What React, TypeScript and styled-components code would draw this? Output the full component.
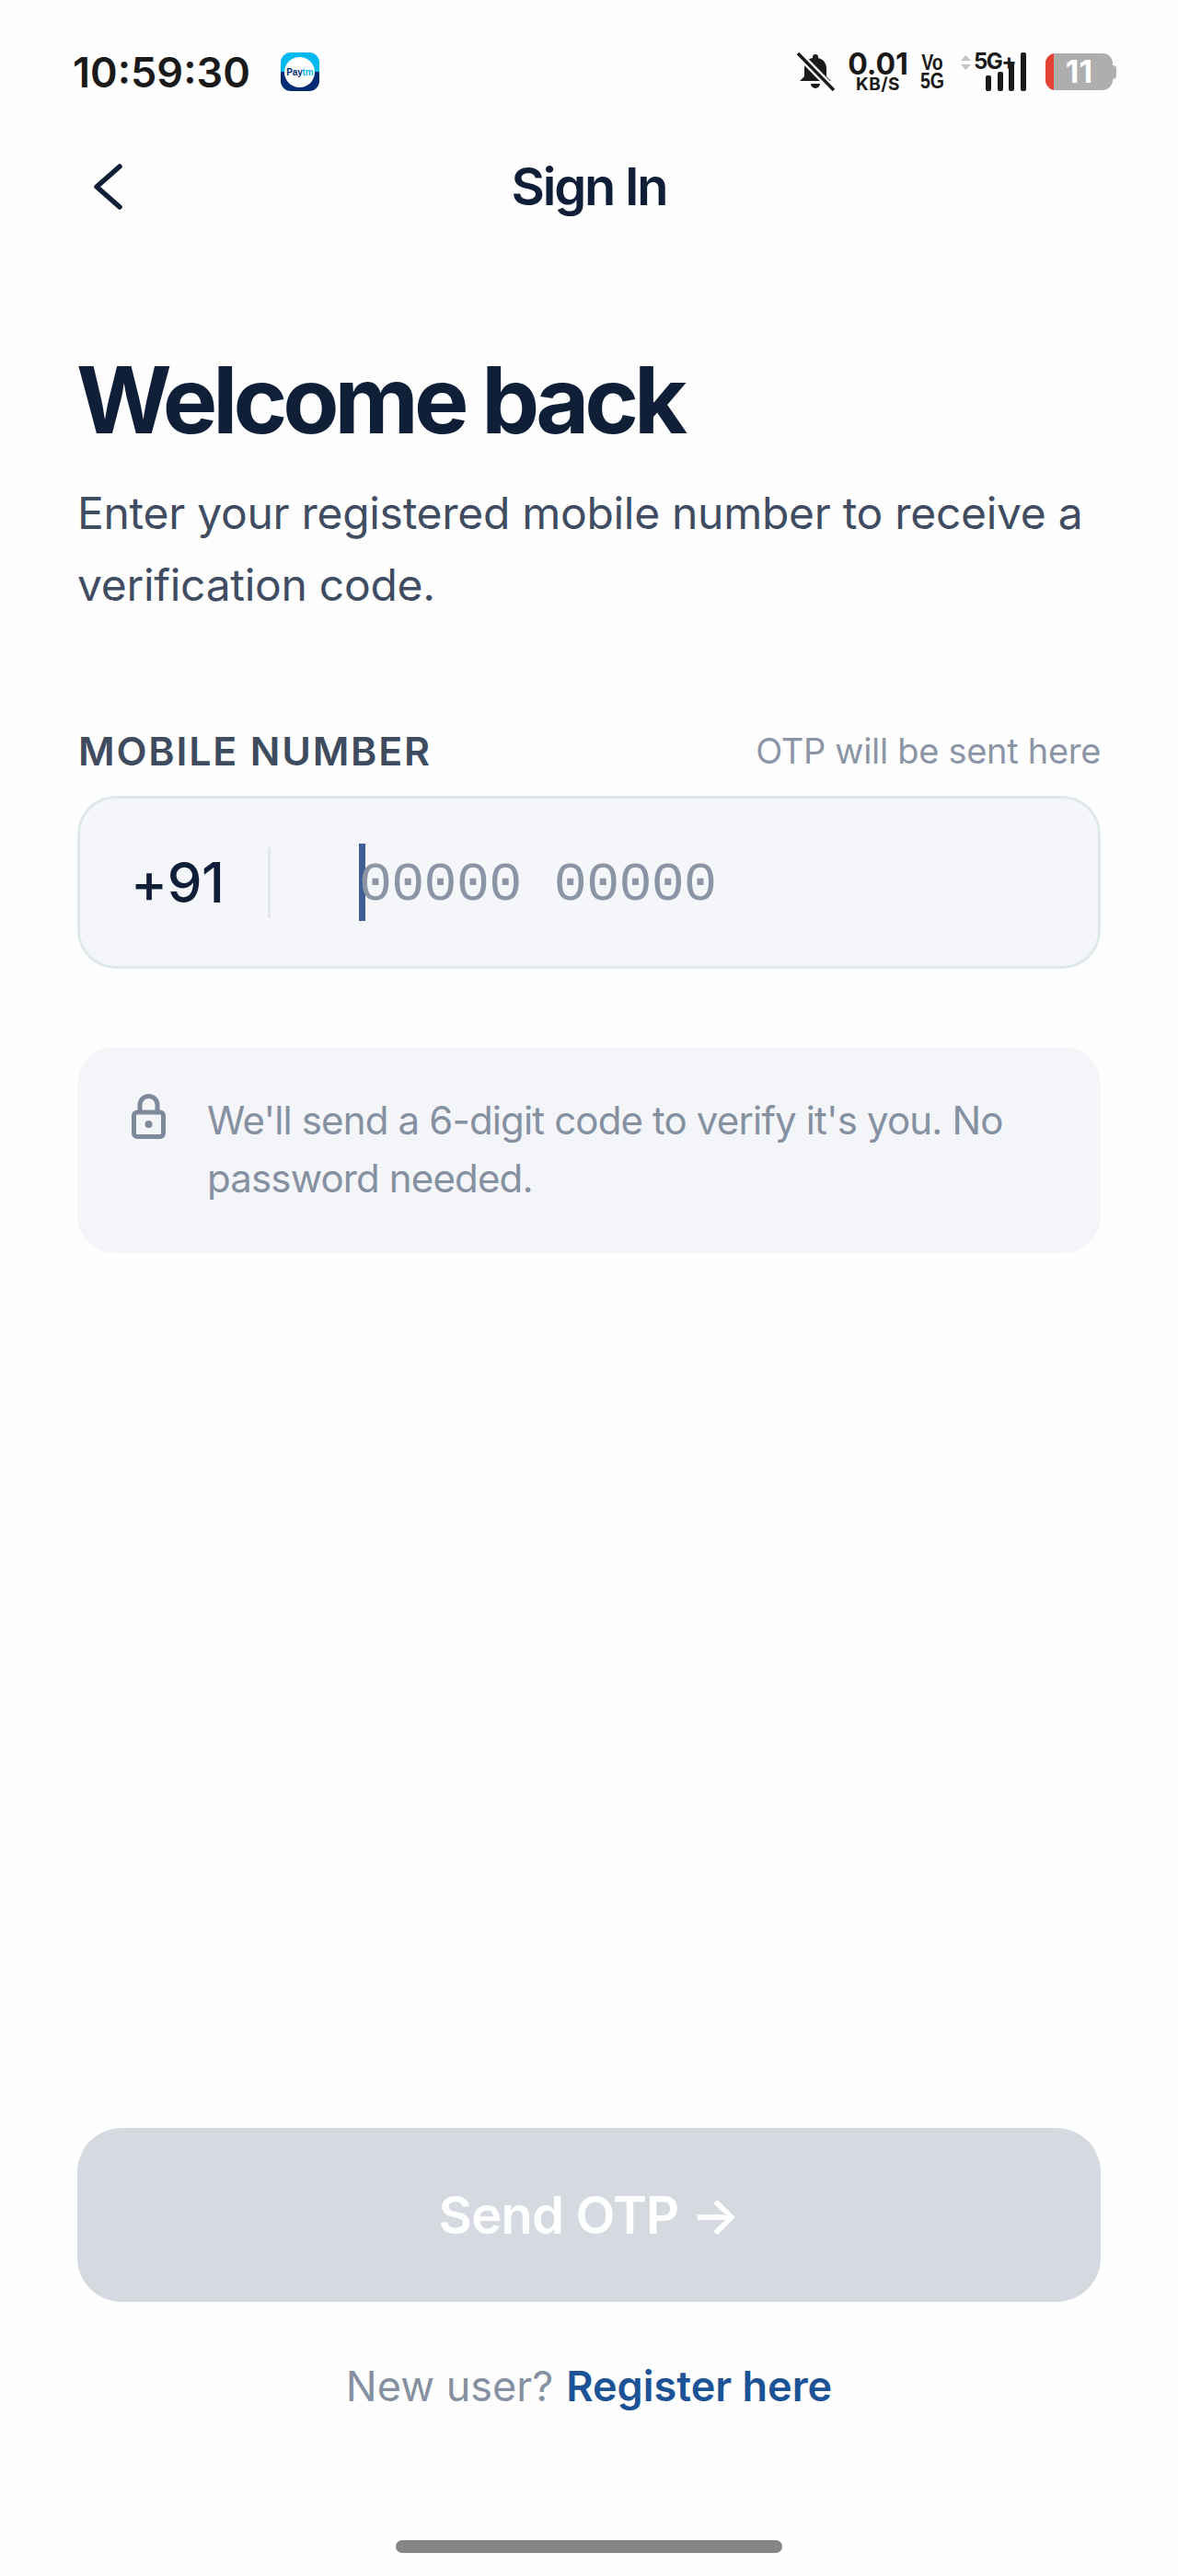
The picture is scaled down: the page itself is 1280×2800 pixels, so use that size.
import React from "react";
import styled, { createGlobalStyle } from "styled-components";

const Global = createGlobalStyle`
  html, body { margin: 0; padding: 0; background: #fefefe; }
  * { box-sizing: border-box; }
  body { font-family: Inter, "Liberation Sans", sans-serif; }
`;

const Page = styled.div`
  width: 1280px;
  height: 2800px;
  display: flex;
  flex-direction: column;
  background: #fefefe;
`;

const StatusBar = styled.div`
  height: 156px;
  padding: 0 67px 0 79px;
  display: flex;
  align-items: center;
  justify-content: space-between;
`;
const StatusLeft = styled.div`
  display: flex;
  align-items: center;
  gap: 33px;
`;
const Clock = styled.span`
  font-size: 45px;
  font-weight: 600;
  color: #1a1a1a;
  line-height: 1;
`;
const AppIcon = styled.div`
  width: 42px;
  height: 42px;
  border-radius: 11px;
  background: linear-gradient(#00b9f1 50%, #012b72 50%);
  display: flex;
  align-items: center;
  justify-content: center;
`;
const AppDisc = styled.div`
  width: 33px;
  height: 33px;
  border-radius: 50%;
  background: #fff;
  display: flex;
  align-items: center;
  justify-content: center;
  font-size: 10px;
  font-weight: 700;
  color: #012b72;
  font-family: "Liberation Sans", sans-serif;
  letter-spacing: -0.2px;
`;
const AppTm = styled.span`
  color: #00b9f1;
`;
const StatusRight = styled.div`
  display: flex;
  align-items: center;
`;
const Speed = styled.div`
  width: 64px;
  margin-left: 15px;
  display: flex;
  flex-direction: column;
  align-items: center;
  color: #1a1a1a;
  font-weight: 700;
`;
const SpeedValue = styled.span`
  font-size: 32px;
  line-height: 27px;
`;
const SpeedUnit = styled.span`
  font-size: 19px;
  line-height: 17px;
  letter-spacing: 0.5px;
`;
const VoLte = styled.div`
  width: 24px;
  margin-left: 15px;
  display: flex;
  flex-direction: column;
  align-items: center;
  font-family: "Liberation Sans", sans-serif;
  font-weight: 700;
  font-size: 23px;
  line-height: 20px;
  color: #1a1a1a;
  transform: scaleX(0.85);
`;
const Signal = styled.div`
  position: relative;
  width: 71px;
  height: 42px;
  margin-left: 19px;
`;
const SignalLabel = styled.span`
  position: absolute;
  left: 14px;
  top: -2px;
  font-size: 24px;
  line-height: 24px;
  font-weight: 700;
  color: #1a1a1a;
  letter-spacing: -1.5px;
`;
const Battery = styled.div`
  width: 77px;
  height: 40px;
  margin-left: 21px;
  display: flex;
  align-items: center;
`;
const BatteryBody = styled.div`
  width: 73px;
  height: 40px;
  border-radius: 11px;
  overflow: hidden;
  display: flex;
  background: #aeaeae;
`;
const BatteryRed = styled.div`
  width: 9px;
  background: #e34234;
`;
const BatteryLevel = styled.span`
  flex: 1;
  text-align: center;
  font-size: 34px;
  line-height: 40px;
  font-weight: 700;
  color: #fff;
  padding-right: 9px;
`;
const BatteryTip = styled.div`
  width: 4px;
  height: 15px;
  border-radius: 0 4px 4px 0;
  background: #aeaeae;
`;

const NavBar = styled.div`
  height: 94px;
  padding: 0 84px;
  display: grid;
  grid-template-columns: 120px 1fr 120px;
  align-items: center;
`;
const BackIcon = styled.svg`
  display: block;
  width: 34px;
  height: 50px;
  margin-left: 16px;
`;
const NavTitle = styled.div`
  text-align: center;
  font-size: 56px;
  font-weight: 600;
  color: #0f1f38;
  letter-spacing: -2.2px;
  line-height: 1;
`;

const Content = styled.main`
  flex: 1;
  padding: 0 84px;
  display: flex;
  flex-direction: column;
`;
const Heading = styled.h1`
  margin: 125px 0 0 -1px;
  font-size: 100px;
  line-height: 120px;
  font-weight: 700;
  color: #0f1f38;
  letter-spacing: -5px;
`;
const Lead = styled.p`
  margin: 24px 0 0;
  font-size: 48px;
  line-height: 78px;
  color: #3f4c62;
  font-weight: 400;
  letter-spacing: -0.3px;
`;
const LabelRow = styled.div`
  margin-top: 111px;
  height: 60px;
  display: flex;
  align-items: center;
  justify-content: space-between;
`;
const FieldLabel = styled.span`
  font-size: 43px;
  font-weight: 600;
  color: #3f4c60;
  letter-spacing: 1.8px;
  margin-left: 1px;
`;
const FieldHint = styled.span`
  font-size: 38px;
  color: #8b95a5;
  letter-spacing: -0.3px;
`;
const InputBox = styled.div`
  margin-top: 19px;
  height: 188px;
  border: 3px solid #e0e8ec;
  border-radius: 42px;
  background: #f4f6f9;
  display: flex;
  align-items: center;
  padding-left: 55px;
`;
const Dial = styled.span`
  width: 149px;
  font-size: 60px;
  font-weight: 500;
  color: #0f1f38;
  letter-spacing: -0.4px;
`;
const Divider = styled.div`
  width: 3px;
  height: 77px;
  background: #e4e7eb;
`;
const Caret = styled.div`
  width: 7px;
  height: 84px;
  margin-left: 96px;
  background: #3f5e96;
`;
const Placeholder = styled.span`
  margin: 6px 0 0 -7px;
  font-family: "Liberation Mono", monospace;
  font-size: 60px;
  letter-spacing: -0.7px;
  color: #8b95a5;
  white-space: pre;
`;
const InfoCard = styled.div`
  margin-top: 85px;
  height: 224px;
  border-radius: 40px;
  background: #f4f5f9;
  padding: 48px 40px 0 59px;
  display: flex;
  align-items: flex-start;
  gap: 45px;
`;
const LockIcon = styled.svg`
  flex: none;
  display: block;
  width: 37px;
  height: 49px;
  margin-top: 3px;
`;
const InfoText = styled.p`
  margin: 0;
  font-size: 42px;
  line-height: 63px;
  color: #8590a1;
  letter-spacing: -0.85px;
`;
const SendButton = styled.button`
  margin-top: auto;
  height: 189px;
  border: none;
  border-radius: 48px;
  background: #d5dae1;
  color: #fff;
  font-family: inherit;
  font-size: 56px;
  font-weight: 600;
  letter-spacing: -0.8px;
`;
const RegisterLine = styled.div`
  margin-top: 61px;
  height: 60px;
  display: flex;
  align-items: center;
  justify-content: center;
  gap: 14px;
  font-size: 45px;
  color: #8590a1;
`;
const RegisterLink = styled.a`
  color: #1c5396;
  font-weight: 600;
`;
const HomeBarRow = styled.div`
  height: 177px;
  display: flex;
  justify-content: center;
  padding-top: 138px;
`;
const HomeBar = styled.div`
  width: 420px;
  height: 14px;
  border-radius: 7px;
  background: #858585;
`;

export default function App() {
  return (
    <Page>
      <Global />
      <StatusBar>
        <StatusLeft>
          <Clock>10:59:30</Clock>
          <AppIcon>
            <AppDisc>
              Pay<AppTm>tm</AppTm>
            </AppDisc>
          </AppIcon>
        </StatusLeft>
        <StatusRight>
          <svg width="41" height="42" viewBox="0 0 41 42">
            <path d="M20 2a3 3 0 0 1 3 3v1c6 1.500 9 6 9 12v8l5 5H3l5-5v-9c0-5 3-10 9-11V5a3 3 0 0 1 3-3zM15 34h10a5 5 0 0 1-10 0z" fill="#1a1a1a" />
            <path d="M1 1l39 40" stroke="#fefefe" strokeWidth="8" />
            <path d="M1 1l39 40" stroke="#1a1a1a" strokeWidth="3.500" />
          </svg>
          <Speed>
            <SpeedValue>0.01</SpeedValue>
            <SpeedUnit>KB/S</SpeedUnit>
          </Speed>
          <VoLte>
            <span>Vo</span>
            <span>5G</span>
          </VoLte>
          <Signal>
            <svg width="71" height="42" viewBox="0 0 71 42">
              <path d="M0 9L5.500 3L11 9zM0 13L5.500 19L11 13z" fill="#c4c4c4" />
              <rect x="27" y="25" width="6" height="17" rx="2" fill="#1a1a1a" />
              <rect x="40" y="21" width="6" height="21" rx="2" fill="#1a1a1a" />
              <rect x="52" y="11" width="6" height="31" rx="2" fill="#1a1a1a" />
              <rect x="65" y="0" width="6" height="42" rx="2" fill="#1a1a1a" />
            </svg>
            <SignalLabel>5G+</SignalLabel>
          </Signal>
          <Battery>
            <BatteryBody>
              <BatteryRed />
              <BatteryLevel>11</BatteryLevel>
            </BatteryBody>
            <BatteryTip />
          </Battery>
        </StatusRight>
      </StatusBar>

      <NavBar>
        <BackIcon viewBox="0 0 34 50" fill="none">
          <path d="M30 3L5 25L30 47" stroke="#0f1f38" strokeWidth="5.500" strokeLinecap="round" strokeLinejoin="round" />
        </BackIcon>
        <NavTitle>Sign In</NavTitle>
        <span />
      </NavBar>

      <Content>
        <Heading>Welcome back</Heading>
        <Lead>Enter your registered mobile number to receive a verification code.</Lead>
        <LabelRow>
          <FieldLabel>MOBILE NUMBER</FieldLabel>
          <FieldHint>OTP will be sent here</FieldHint>
        </LabelRow>
        <InputBox>
          <Dial>+91</Dial>
          <Divider />
          <Caret />
          <Placeholder>00000 00000</Placeholder>
        </InputBox>
        <InfoCard>
          <LockIcon viewBox="0 0 37 49" fill="none">
            <path d="M9 20V12a9.500 9.500 0 0 1 19 0v8" stroke="#7e8a9c" strokeWidth="5" />
            <rect x="2.500" y="20" width="32" height="26.500" rx="3.500" stroke="#7e8a9c" strokeWidth="5" />
            <circle cx="18.500" cy="33" r="4" fill="#7e8a9c" />
          </LockIcon>
          <InfoText>We'll send a 6-digit code to verify it's you. No password needed.</InfoText>
        </InfoCard>
        <SendButton>Send OTP →</SendButton>
        <RegisterLine>
          <span>New user?</span>
          <RegisterLink>Register here</RegisterLink>
        </RegisterLine>
      </Content>
      <HomeBarRow>
        <HomeBar />
      </HomeBarRow>
    </Page>
  );
}
